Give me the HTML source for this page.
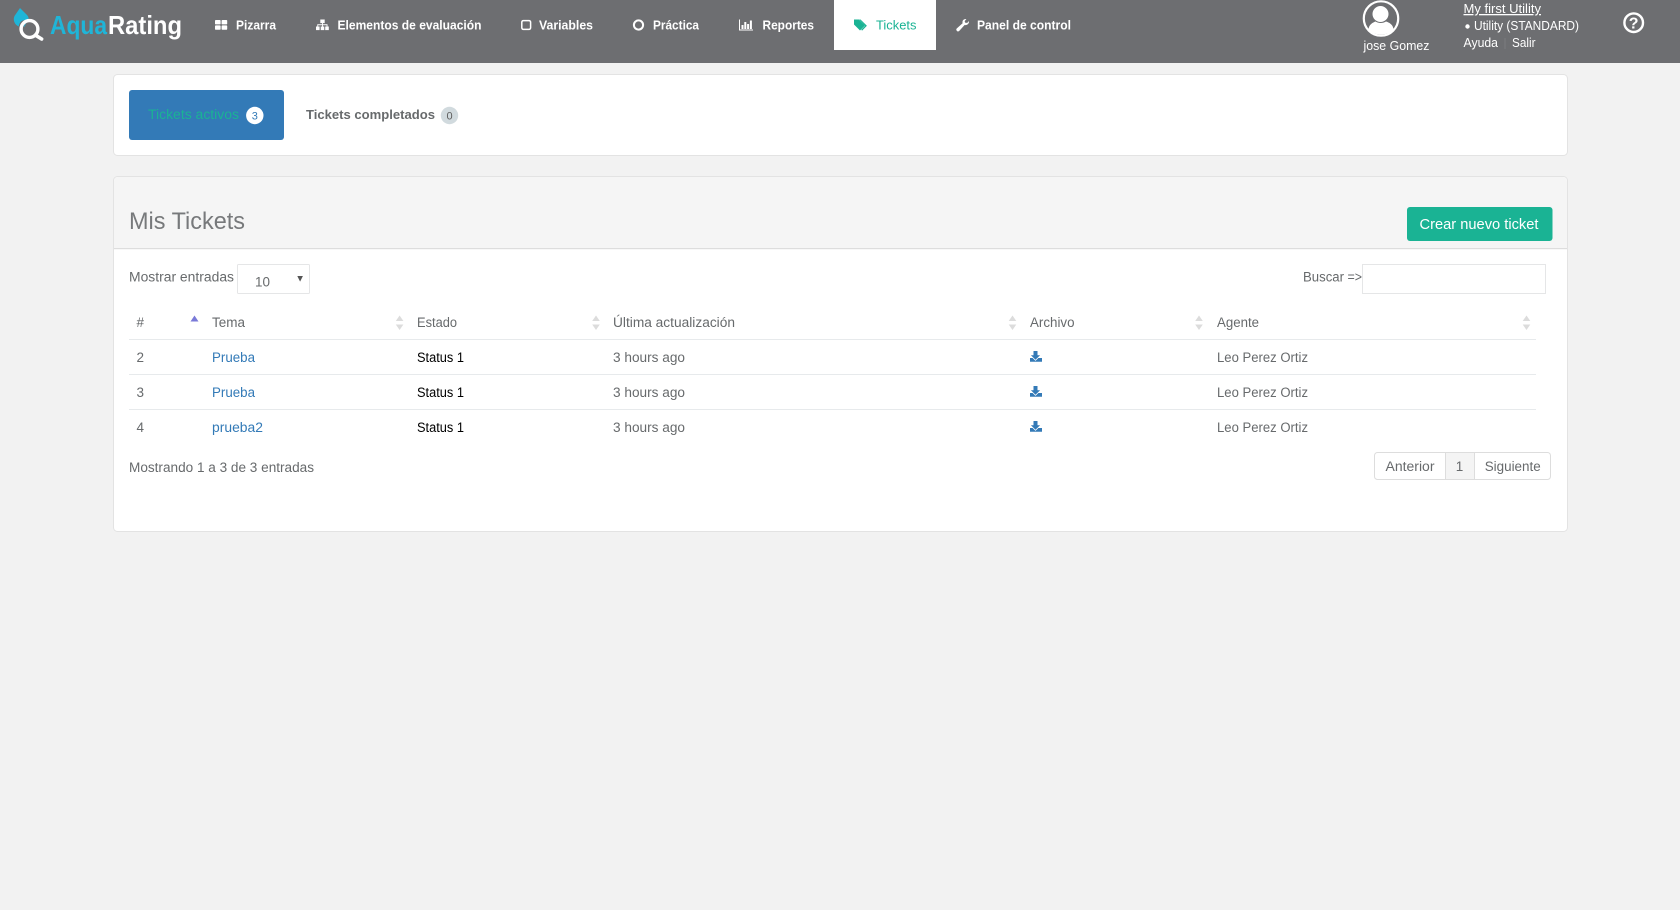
<!DOCTYPE html>
<html lang="es">
<head>
<meta charset="utf-8">
<title>Mis Tickets - AquaRating</title>
<style>
html,body{margin:0;padding:0;width:1680px;height:910px;overflow:hidden;background:#f2f2f2}
svg{display:block}
text{font-family:"Liberation Sans",sans-serif;font-size:13.5px;fill:#676a6c}
.nav{font-size:13px;font-weight:700;fill:#fff}
.w{fill:#fff;font-size:13px}
.b{fill:#337ab7}
.k{fill:#000}
</style>
</head>
<body>
<svg width="1680" height="910" viewBox="0 0 1680 910" xmlns="http://www.w3.org/2000/svg">
<!-- header -->
<rect x="0" y="0" width="1680" height="63" fill="#6d6e71"/>
<!-- logo -->
<path d="M20 8 L26.5 14.5 C29 17 29 19 28 21 C23 18.5 19.5 21.5 18.7 26.5 C14.5 24.5 12.7 20 14.5 16 Z" fill="#1fb5d8"/>
<path d="M23 26 C23 23.5 25 21.5 27 21.5 L24.5 27 Z" fill="#3f9ab3"/>
<circle cx="29.5" cy="29" r="8.4" fill="none" stroke="#fff" stroke-width="3.4"/>
<path d="M35.5 35.2 L41.6 39" stroke="#fff" stroke-width="3.6" stroke-linecap="round"/>
<text x="50" y="34" textLength="57" lengthAdjust="spacingAndGlyphs" style="font-size:26px;font-weight:700;fill:#1fb5d8">Aqua</text>
<text x="108" y="34" textLength="74" lengthAdjust="spacingAndGlyphs" style="font-size:26px;font-weight:700;fill:#fff">Rating</text>
<!-- nav icons -->
<g fill="#fff">
<rect x="215" y="20" width="5.6" height="4.4" rx=".8"/><rect x="221.6" y="20" width="5.6" height="4.4" rx=".8"/>
<rect x="215" y="25.4" width="5.6" height="4.4" rx=".8"/><rect x="221.6" y="25.4" width="5.6" height="4.4" rx=".8"/>
<rect x="320.3" y="19.5" width="4.4" height="3.6"/><rect x="316" y="26.5" width="3.6" height="3.6"/><rect x="320.7" y="26.5" width="3.6" height="3.6"/><rect x="325.2" y="26.5" width="3.6" height="3.6"/>
<path d="M317.3 26.5V24.3H327.5V26.5H326.6V25.2H322.9V26.5H322V25.2H318.2V26.5Z"/>
<path d="M322 22h.9v2.5H322z"/>
</g>
<rect x="521.8" y="20.6" width="8.8" height="8.8" rx="1.6" fill="none" stroke="#fff" stroke-width="1.5"/>
<circle cx="638.5" cy="25" r="4.6" fill="none" stroke="#fff" stroke-width="2"/>
<g fill="#fff">
<path d="M739 19.5h1v10h13v1h-14z"/>
<rect x="741.5" y="25" width="2" height="4"/><rect x="744.3" y="22" width="2" height="7"/><rect x="747.1" y="24" width="2" height="5"/><rect x="749.9" y="20.5" width="2" height="8.5"/>
<path d="M957 31 C956 30 956 29 957 28.2 L962.6 23.2 C962 20.8 963.6 18.6 966.4 19 L964.6 21.2 L965.6 23 L967.6 22.6 L969 21 C969.3 23.6 967.2 25.6 964.6 25 L959.4 30.8 C958.6 31.6 957.7 31.7 957 31 Z"/>
</g>
<!-- nav text -->
<text class="nav" x="236" y="29.5" textLength="40" lengthAdjust="spacingAndGlyphs">Pizarra</text>
<text class="nav" x="337.5" y="29.5" textLength="144" lengthAdjust="spacingAndGlyphs">Elementos de evaluación</text>
<text class="nav" x="539" y="29.5" textLength="54" lengthAdjust="spacingAndGlyphs">Variables</text>
<text class="nav" x="653" y="29.5" textLength="46" lengthAdjust="spacingAndGlyphs">Práctica</text>
<text class="nav" x="762.5" y="29.5" textLength="51.5" lengthAdjust="spacingAndGlyphs">Reportes</text>
<rect x="834" y="0" width="102" height="50" fill="#fff"/>
<path d="M854 19.5h5l6 6-5 5-6-6Z" fill="#1ab394"/>
<path d="M860.5 19.5l6.4 6.2-4.8 4.9-.9-.9 3.9-4-5.9-6.2Z" fill="#1ab394"/>
<text class="nav" x="876" y="29.5" textLength="40.5" lengthAdjust="spacingAndGlyphs" style="fill:#1ab394;font-weight:400">Tickets</text>
<text class="nav" x="977" y="29.5" textLength="94" lengthAdjust="spacingAndGlyphs">Panel de control</text>
<!-- user -->
<circle cx="1381" cy="18.5" r="17.2" fill="none" stroke="#fff" stroke-width="2.2"/>
<circle cx="1380.5" cy="14" r="8" fill="#fff"/>
<path d="M1368.5 30 C1368.5 24.5 1373 22.5 1375.5 21.5 C1378.5 23.5 1383 23.5 1386 21.5 C1389 22.5 1393.5 24.5 1393.5 30 C1387 36 1375 36 1368.5 30Z" fill="#fff"/>
<text class="w" x="1363.5" y="50" textLength="66" lengthAdjust="spacingAndGlyphs">jose Gomez</text>
<text class="w" x="1463.5" y="13" textLength="77.5" lengthAdjust="spacingAndGlyphs" style="text-decoration:underline">My first Utility</text>
<circle cx="1467.5" cy="26.5" r="2.2" fill="#fff"/>
<text class="w" x="1474" y="30" textLength="105" lengthAdjust="spacingAndGlyphs">Utility (STANDARD)</text>
<text class="w" x="1463.5" y="47" textLength="34.5" lengthAdjust="spacingAndGlyphs">Ayuda</text>
<rect x="1504.5" y="38" width="1" height="11" fill="#7b7c7f"/>
<text class="w" x="1512" y="47" textLength="23.5" lengthAdjust="spacingAndGlyphs">Salir</text>
<circle cx="1633.7" cy="22.7" r="9.3" fill="none" stroke="#fff" stroke-width="2.4"/>
<text x="1633.7" y="28.3" text-anchor="middle" style="font-size:16px;font-weight:700;fill:#fff">?</text>

<!-- tabs panel -->
<rect x="113.5" y="74.5" width="1454" height="81" rx="4" fill="#fff" stroke="#e3e3e3"/>
<rect x="129" y="90" width="155" height="50" rx="3" fill="#337ab7"/>
<text x="148" y="119" textLength="91" lengthAdjust="spacingAndGlyphs" style="fill:#1ab394;font-weight:400">Tickets activos</text>
<circle cx="254.8" cy="115.5" r="8.7" fill="#fff"/>
<text x="254.8" y="119.5" text-anchor="middle" style="font-size:11px;fill:#337ab7">3</text>
<text x="306" y="119" textLength="129" lengthAdjust="spacingAndGlyphs" style="font-weight:700;font-size:13px">Tickets completados</text>
<circle cx="449.5" cy="115.5" r="8.7" fill="#d1dade"/>
<text x="449.5" y="119.5" text-anchor="middle" style="font-size:11px;fill:#5e5e5e">0</text>

<!-- main panel -->
<rect x="113.5" y="176.5" width="1454" height="355" rx="4" fill="#fff" stroke="#e3e3e3"/>
<path d="M114 248.5V181a4 4 0 0 1 4-4H1563a4 4 0 0 1 4 4V248.5Z" fill="#f5f5f5"/>
<rect x="114" y="248" width="1453" height="1.2" fill="#ddd"/>
<text x="129" y="229" textLength="116" lengthAdjust="spacingAndGlyphs" style="font-size:24px;font-weight:400;fill:#77797b">Mis Tickets</text>
<rect x="1407" y="207" width="145.5" height="34" rx="3" fill="#1ab394"/>
<text x="1419.5" y="229" textLength="119" lengthAdjust="spacingAndGlyphs" style="font-size:15px;fill:#fff">Crear nuevo ticket</text>

<text x="129" y="281.5" textLength="105" lengthAdjust="spacingAndGlyphs">Mostrar entradas</text>
<rect x="237.5" y="264.5" width="72" height="29" rx="1" fill="#fff" stroke="#e5e6e7"/>
<text x="255" y="286.5" textLength="15" lengthAdjust="spacingAndGlyphs" style="font-size:14px">10</text>
<path d="M297.3 276h5.6l-2.8 5.6Z" fill="#555"/>
<text x="1303" y="281.5" textLength="41" lengthAdjust="spacingAndGlyphs">Buscar</text>
<text x="1347.5" y="281.5" textLength="14.5" lengthAdjust="spacingAndGlyphs">=&gt;</text>
<rect x="1362.5" y="264.5" width="183" height="29" fill="#fff" stroke="#e5e6e7"/>

<!-- table header -->
<text x="136.5" y="327">#</text>
<text x="212" y="327" textLength="33" lengthAdjust="spacingAndGlyphs">Tema</text>
<text x="417" y="327" textLength="40" lengthAdjust="spacingAndGlyphs">Estado</text>
<text x="613" y="327" textLength="122" lengthAdjust="spacingAndGlyphs">Última actualización</text>
<text x="1030" y="327" textLength="44.5" lengthAdjust="spacingAndGlyphs">Archivo</text>
<text x="1217" y="327" textLength="42" lengthAdjust="spacingAndGlyphs">Agente</text>
<path d="M194.5 315.5l4 6h-8Z" fill="#7a7ad8"/>
<g fill="#dcdcdc">
<path d="M399.6 315.5l3.8 5.5h-7.6Z M399.6 330l3.8-5.5h-7.6Z"/>
<path d="M596 315.5l3.8 5.5h-7.6Z M596 330l3.8-5.5h-7.6Z"/>
<path d="M1012.5 315.5l3.8 5.5h-7.6Z M1012.5 330l3.8-5.5h-7.6Z"/>
<path d="M1199 315.5l3.8 5.5h-7.6Z M1199 330l3.8-5.5h-7.6Z"/>
<path d="M1526.5 315.5l3.8 5.5h-7.6Z M1526.5 330l3.8-5.5h-7.6Z"/>
</g>
<rect x="129" y="339" width="1407" height="1" fill="#e7eaec"/>
<rect x="129" y="374" width="1407" height="1" fill="#e7eaec"/>
<rect x="129" y="409" width="1407" height="1" fill="#e7eaec"/>

<!-- rows -->
<text x="136.5" y="362">2</text>
<a><text class="b" x="212" y="362" textLength="43" lengthAdjust="spacingAndGlyphs">Prueba</text></a>
<text class="k" x="417" y="362" textLength="47" lengthAdjust="spacingAndGlyphs">Status 1</text>
<text x="613" y="362" textLength="72" lengthAdjust="spacingAndGlyphs">3 hours ago</text>
<path d="M1033.5 351h4v4.2h2.6l-4.6 4.6-4.6-4.6h2.6Z M1030 358h2.6l2.9 2.9 2.9-2.9h3.6v3.8h-12Z" fill="#337ab7"/>
<text x="1217" y="362" textLength="91" lengthAdjust="spacingAndGlyphs">Leo Perez Ortiz</text>

<text x="136.5" y="397">3</text>
<a><text class="b" x="212" y="397" textLength="43" lengthAdjust="spacingAndGlyphs">Prueba</text></a>
<text class="k" x="417" y="397" textLength="47" lengthAdjust="spacingAndGlyphs">Status 1</text>
<text x="613" y="397" textLength="72" lengthAdjust="spacingAndGlyphs">3 hours ago</text>
<path d="M1033.5 386h4v4.2h2.6l-4.6 4.6-4.6-4.6h2.6Z M1030 393h2.6l2.9 2.9 2.9-2.9h3.6v3.8h-12Z" fill="#337ab7"/>
<text x="1217" y="397" textLength="91" lengthAdjust="spacingAndGlyphs">Leo Perez Ortiz</text>

<text x="136.5" y="432">4</text>
<a><text class="b" x="212" y="432" textLength="51" lengthAdjust="spacingAndGlyphs">prueba2</text></a>
<text class="k" x="417" y="432" textLength="47" lengthAdjust="spacingAndGlyphs">Status 1</text>
<text x="613" y="432" textLength="72" lengthAdjust="spacingAndGlyphs">3 hours ago</text>
<path d="M1033.5 421h4v4.2h2.6l-4.6 4.6-4.6-4.6h2.6Z M1030 428h2.6l2.9 2.9 2.9-2.9h3.6v3.8h-12Z" fill="#337ab7"/>
<text x="1217" y="432" textLength="91" lengthAdjust="spacingAndGlyphs">Leo Perez Ortiz</text>

<!-- footer -->
<text x="129" y="472" textLength="185" lengthAdjust="spacingAndGlyphs">Mostrando 1 a 3 de 3 entradas</text>
<rect x="1445.5" y="452.5" width="29" height="27" fill="#f4f4f4"/>
<rect x="1374.5" y="452.5" width="176" height="27" rx="3" fill="none" stroke="#dddddd"/>
<path d="M1445.5 452.5v27M1474.5 452.5v27" stroke="#dddddd"/>
<text x="1385.5" y="471" textLength="49" lengthAdjust="spacingAndGlyphs">Anterior</text>
<text x="1459.5" y="471" text-anchor="middle">1</text>
<text x="1484.7" y="471" textLength="56" lengthAdjust="spacingAndGlyphs">Siguiente</text>
</svg>
</body>
</html>
